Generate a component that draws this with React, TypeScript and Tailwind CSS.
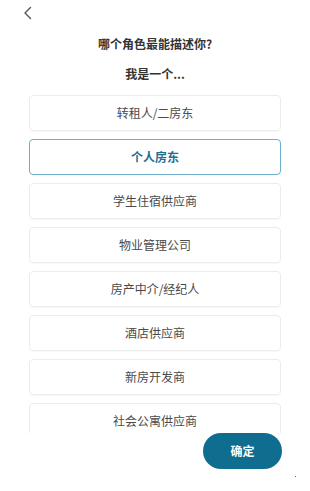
import React from "react";

const options = [
  "转租人/二房东",
  "个人房东",
  "学生住宿供应商",
  "物业管理公司",
  "房产中介/经纪人",
  "酒店供应商",
  "新房开发商",
  "社会公寓供应商",
];

export default function App() {
  const selected = 1;
  return (
    <div
      className="w-[310px] h-[491px] bg-white flex flex-col relative overflow-hidden"
      style={{ fontFamily: '"Noto Sans CJK SC", "Noto Sans", sans-serif' }}
    >
      <div className="h-[26px] pl-[22px] pt-[6px]">
        <svg width="12" height="14" viewBox="0 0 12 14" fill="none">
          <path d="M8.5 1.5 L3 7 L8.5 12.5" stroke="#555" strokeWidth="1.4" strokeLinecap="round" strokeLinejoin="round" />
        </svg>
      </div>
      <div className="mt-[10px] h-[16px] leading-[16px] text-[12px] font-bold text-[#333] text-center">
        哪个角色最能描述你?
      </div>
      <div className="mt-[14px] h-[16px] leading-[16px] text-[12px] font-bold text-[#333] text-center">
        我是一个...
      </div>
      <div className="mt-[13px] h-[338px] overflow-hidden px-[29px] flex flex-col gap-[8px]">
        {options.map((o, i) =>
          i === selected ? (
            <div
              key={o}
              className="shrink-0 h-[36px] rounded-[4px] border-[1.5px] border-[#6fafcb] flex items-center justify-center text-[12px] font-bold text-[#1d6f8f]"
            >
              {o}
            </div>
          ) : (
            <div
              key={o}
              className="shrink-0 h-[36px] rounded-[4px] border border-[#ececec] shadow-[0_1px_1px_rgba(0,0,0,0.03)] flex items-center justify-center text-[12px] text-[#4a4a4a]"
            >
              {o}
            </div>
          )
        )}
      </div>
      <div className="flex justify-end pr-[28px]">
        <button className="w-[79px] h-[36px] rounded-full bg-[#0f6e90] text-white text-[12px] font-bold flex items-center justify-center">
          确定
        </button>
      </div>
      <div className="absolute left-[295px] top-[476px] w-[1px] h-[1px] bg-[#2a7fa0]" />
    </div>
  );
}
